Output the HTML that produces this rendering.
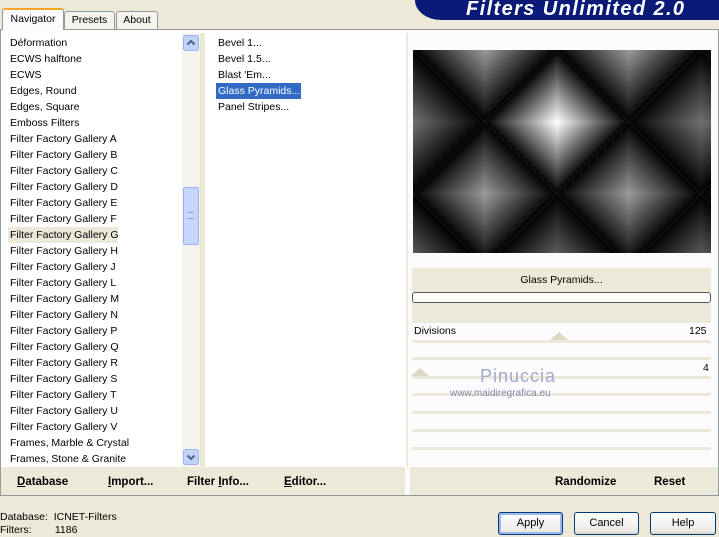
<!DOCTYPE html>
<html><head><meta charset="utf-8"><style>
*{margin:0;padding:0;box-sizing:border-box}
body{width:719px;height:537px;background:#ece9d8;font-family:"Liberation Sans",sans-serif;font-size:10.5px;color:#000;position:relative;overflow:hidden}
.a{position:absolute}
.tab{position:absolute;border:1px solid #919b9c;border-bottom:none;background:#f4f3ee;text-align:center;font-size:10.5px;border-radius:3px 3px 0 0}
.li{position:absolute;left:10px;height:16px;line-height:16px;white-space:nowrap}
.bb{position:absolute;font-weight:bold;font-size:11.5px;top:476px}
.btn{position:absolute;top:512px;height:23px;border:1px solid #003c74;border-radius:3px;background:linear-gradient(#fff,#ecebe6 85%,#d6d0c5);text-align:center;line-height:21px;font-size:11px}
.sep{position:absolute;left:412px;width:299px;height:3px;background:#ece9d8}
</style></head><body>
<div class="a" style="left:415px;top:0;width:304px;height:20px;background:#0a1a78;border-radius:0 0 0 26px/0 0 0 20px"></div>
<div class="a" style="left:466px;top:-2px;color:#fff;font-weight:bold;font-style:italic;font-size:20px;letter-spacing:1.4px">Filters Unlimited 2.0</div>
<div class="a" style="left:0;top:29px;width:719px;height:467px;border:1px solid #919b9c;background:#fcfcfe"></div>
<div class="tab" style="left:64px;top:11px;width:51px;height:18px;line-height:17px">Presets</div>
<div class="tab" style="left:116px;top:11px;width:42px;height:18px;line-height:17px">About</div>
<div class="tab" style="left:2px;top:8px;width:62px;height:22px;line-height:19px;background:#fcfcfe;border-top:2px solid #f5a623;z-index:2">Navigator</div>
<div class="a" style="left:1px;top:33px;width:181px;height:434px;background:#fff"></div>
<div class="a" style="left:8px;top:227px;width:110px;height:16px;background:#ece9d8"></div>
<div id="lst"></div>
<div class="a" style="left:182px;top:33px;width:18px;height:434px;background:#f4f3ee"></div>
<svg class="a" style="left:183px;top:35px" width="16" height="16"><rect x="0.5" y="0.5" width="15" height="15" rx="2" fill="#c1d3fb" stroke="#9db4e8"/><path d="M4.5 9.5 L8 6 L11.5 9.5" fill="none" stroke="#4d6185" stroke-width="2"/></svg>
<div class="a" style="left:183px;top:187px;width:16px;height:58px;background:#c6d6fc;border:1px solid #9db4e8;border-radius:2px"></div>
<div class="a" style="left:187px;top:212px;width:7px;height:7px;border-top:1px solid #8aa0d6;border-bottom:1px solid #8aa0d6"></div>
<svg class="a" style="left:183px;top:449px" width="16" height="16"><rect x="0.5" y="0.5" width="15" height="15" rx="2" fill="#c1d3fb" stroke="#9db4e8"/><path d="M4.5 6.5 L8 10 L11.5 6.5" fill="none" stroke="#4d6185" stroke-width="2"/></svg>
<div class="a" style="left:200px;top:33px;width:5px;height:434px;background:#ece9d8"></div>
<div class="a" style="left:205px;top:33px;width:201px;height:434px;background:#fff"></div>
<div class="li" style="left:218px;top:35px">Bevel 1...</div>
<div class="li" style="left:218px;top:51px">Bevel 1.5...</div>
<div class="li" style="left:218px;top:67px">Blast 'Em...</div>
<div class="li" style="left:216px;top:83px;width:85px;padding-left:2px;background:#316ac5;color:#fff">Glass Pyramids...</div>
<div class="li" style="left:218px;top:99px">Panel Stripes...</div>
<div class="a" style="left:406px;top:33px;width:2px;height:434px;background:#ece9d8"></div>
<svg class="a" id="pv" style="left:413px;top:50px" width="298" height="203"></svg>
<div class="a" style="left:412px;top:268px;width:299px;height:24px;background:#ece9d8;text-align:center;line-height:24px">Glass Pyramids...</div>
<div class="a" style="left:412px;top:292px;width:299px;height:11px;border:1px solid #555;border-radius:3px;background:#fff"></div>
<div class="a" style="left:412px;top:303px;width:299px;height:20px;background:#ece9d8"></div>
<div class="a" style="left:414px;top:325px">Divisions</div>
<div class="a" style="left:689px;top:325px">125</div>
<div class="a" style="left:550px;top:332px;width:0;height:0;border-left:9px solid transparent;border-right:9px solid transparent;border-bottom:8px solid #ddd8c4"></div>
<div class="sep" style="top:340px"></div>
<div class="sep" style="top:357px"></div>
<div class="a" style="left:703px;top:362px">4</div>
<div class="a" style="left:411px;top:368px;width:0;height:0;border-left:9px solid transparent;border-right:9px solid transparent;border-bottom:8px solid #ddd8c4"></div>
<div class="sep" style="top:376px"></div>
<div class="sep" style="top:393px"></div>
<div class="sep" style="top:411px"></div>
<div class="sep" style="top:429px"></div>
<div class="sep" style="top:447px"></div>
<div class="a" style="left:480px;top:366px;color:#a0a8c8;font-size:18px;letter-spacing:1px">Pinuccia</div>
<div class="a" style="left:450px;top:388px;color:#8088a8;font-size:10px">www.maidiregrafica.eu</div>
<div class="a" style="left:1px;top:467px;width:404px;height:28px;background:#ece9d8"></div>
<div class="a" style="left:410px;top:467px;width:308px;height:28px;background:#ece9d8"></div>
<div class="bb" style="left:17px"><u>D</u>atabase</div>
<div class="bb" style="left:108px"><u>I</u>mport...</div>
<div class="bb" style="left:187px">Filter <u>I</u>nfo...</div>
<div class="bb" style="left:284px"><u>E</u>ditor...</div>
<div class="bb" style="left:555px">Randomize</div>
<div class="bb" style="left:654px">Reset</div>
<div class="a" style="left:0;top:511px;line-height:13px;font-size:10.5px">Database:&nbsp; ICNET-Filters<br>Filters:&nbsp;&nbsp;&nbsp;&nbsp;&nbsp;&nbsp;&nbsp; 1186</div>
<div class="btn" style="left:498px;width:65px;box-shadow:inset 0 0 0 2px #9cb8ee">Apply</div>
<div class="btn" style="left:574px;width:65px">Cancel</div>
<div class="btn" style="left:650px;width:66px">Help</div>
<script>
var items=["Déformation","ECWS halftone","ECWS","Edges, Round","Edges, Square","Emboss Filters","Filter Factory Gallery A","Filter Factory Gallery B","Filter Factory Gallery C","Filter Factory Gallery D","Filter Factory Gallery E","Filter Factory Gallery F","Filter Factory Gallery G","Filter Factory Gallery H","Filter Factory Gallery J","Filter Factory Gallery L","Filter Factory Gallery M","Filter Factory Gallery N","Filter Factory Gallery P","Filter Factory Gallery Q","Filter Factory Gallery R","Filter Factory Gallery S","Filter Factory Gallery T","Filter Factory Gallery U","Filter Factory Gallery V","Frames, Marble & Crystal","Frames, Stone & Granite"];
var h="";items.forEach(function(t,i){h+='<div class="li" style="top:'+(35+16*i)+'px">'+t.replace(/&/g,"&amp;")+'</div>'});
document.getElementById("lst").innerHTML=h;
var S=72,g="",p="",n=0;
function I(i,j){var d=Math.sqrt((i-2)*(i-2)+(j-1)*(j-1));return Math.max(0.42,1-0.28*d);}
function P(i,j){return [i*S,j*S];}
for(var j=0;j<3;j++)for(var i=0;i<5;i++){
 var TL=P(i,j),TR=P(i+1,j),BL=P(i,j+1),BR=P(i+1,j+1),tris;
 if((i+j)%2==0) tris=[[TR,[i+1,j],TL,BR],[BL,[i,j+1],TL,BR]];
 else tris=[[TL,[i,j],TR,BL],[BR,[i+1,j+1],TR,BL]];
 tris.forEach(function(t){var b=t[0],d1=t[2],d2=t[3],m=[(d1[0]+d2[0])/2,(d1[1]+d2[1])/2];
  var c=Math.round(255*I(t[1][0],t[1][1]));
  g+='<linearGradient id="g'+n+'" gradientUnits="userSpaceOnUse" x1="'+b[0]+'" y1="'+b[1]+'" x2="'+m[0]+'" y2="'+m[1]+'"><stop offset="0" stop-color="rgb('+c+','+c+','+c+')"/><stop offset="1" stop-color="#000"/></linearGradient>';
  p+='<polygon fill="url(#g'+n+')" points="'+b.join(",")+' '+d1.join(",")+' '+d2.join(",")+'"/>';n++;});
}
document.getElementById("pv").innerHTML='<defs>'+g+'</defs>'+p;
</script>
</body></html>
